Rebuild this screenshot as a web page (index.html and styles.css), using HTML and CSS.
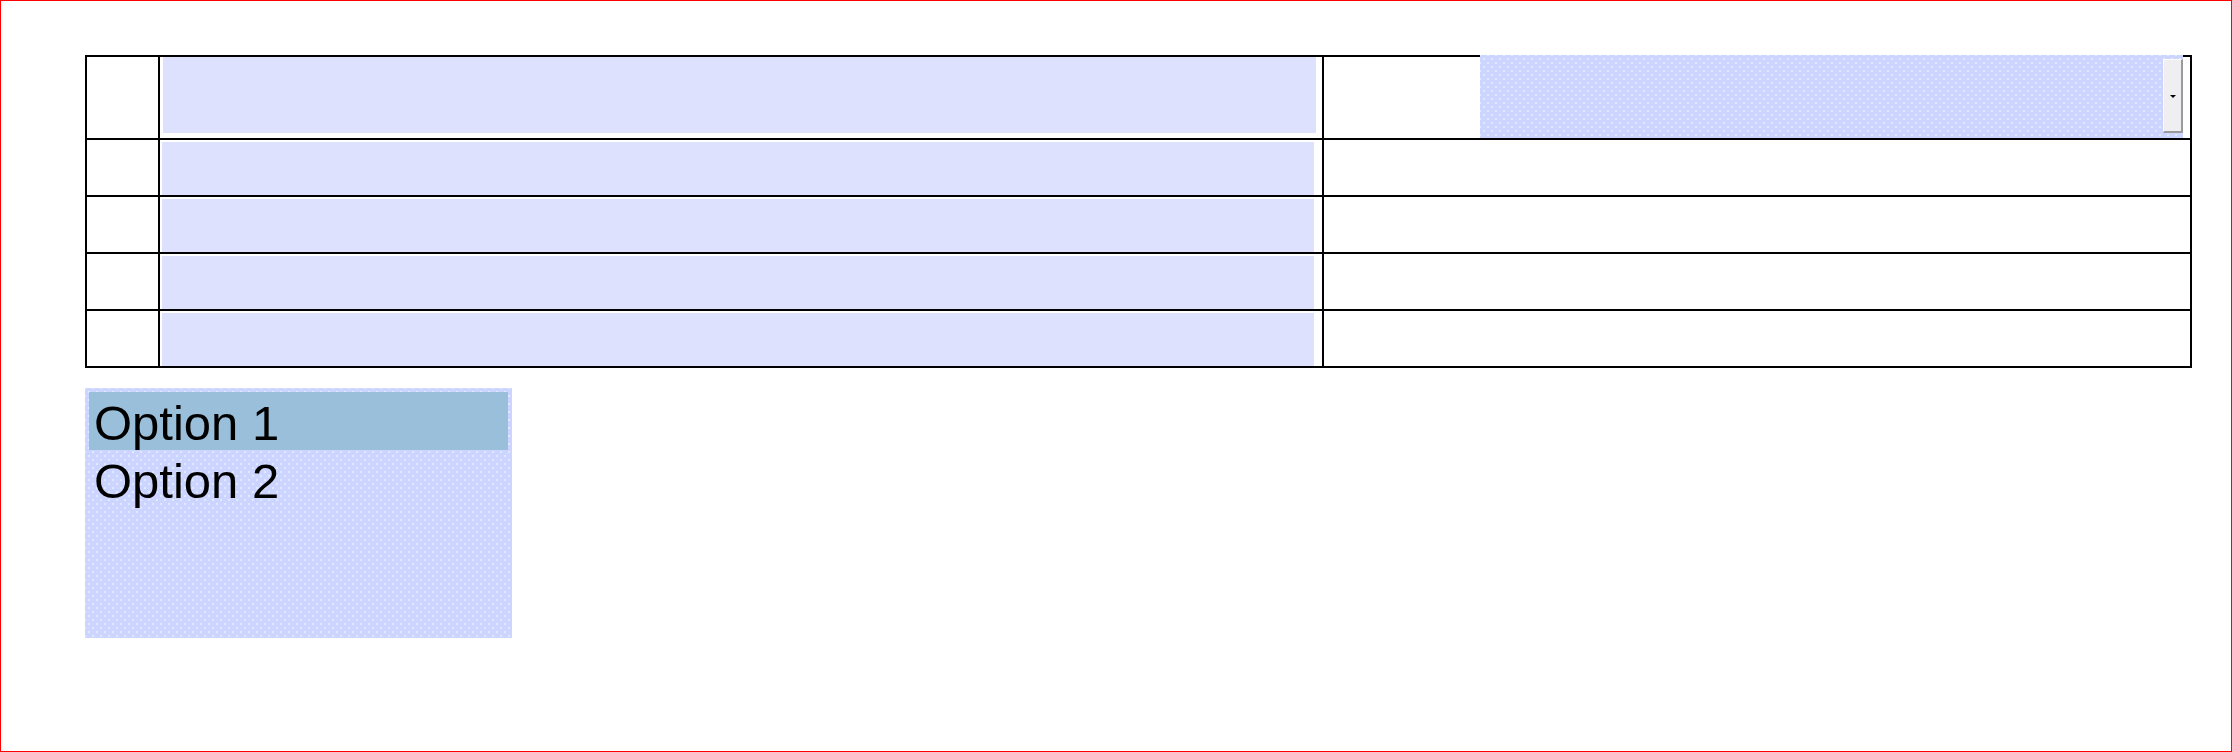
FILE: index.html
```html
<!DOCTYPE html>
<html lang="en">
<head>
    <meta charset="UTF-8">
    <title>Form</title>
    <link rel="stylesheet" href="styles.css">
</head>
<body>

<table class="grid">
    <tr class="first">
        <td class="num"></td>
        <td class="field"><input type="text" class="text-big"></td>
        <td class="extra">
            <div class="combo">
                <span class="combo-btn"><span class="arrow"></span></span>
            </div>
        </td>
    </tr>
    <tr>
        <td class="num"></td>
        <td class="field"><input type="text" class="text"></td>
        <td class="extra"></td>
    </tr>
    <tr>
        <td class="num"></td>
        <td class="field"><input type="text" class="text"></td>
        <td class="extra"></td>
    </tr>
    <tr>
        <td class="num"></td>
        <td class="field"><input type="text" class="text"></td>
        <td class="extra"></td>
    </tr>
    <tr>
        <td class="num"></td>
        <td class="field"><input type="text" class="text"></td>
        <td class="extra"></td>
    </tr>
</table>

<ul class="listbox">
    <li class="selected">Option 1</li>
    <li>Option 2</li>
</ul>

</body>
</html>
```

FILE: styles.css
```css
/* General Styling */
body {
    margin: 0;
    height: 752px;
    box-sizing: border-box;
    border: 1px solid #ff0000;
    padding: 54px 0 0 84px;
    background-color: #ffffff;
    font-family: "Liberation Sans", Arial, sans-serif;
}

/* Table */
.grid {
    border-collapse: separate;
    border-spacing: 0;
    border-left: 2px solid #000;
    border-top: 2px solid #000;
    table-layout: fixed;
}
.grid td {
    padding: 0;
    border-right: 2px solid #000;
    border-bottom: 2px solid #000;
    vertical-align: top;
    height: 55px;
    box-sizing: border-box;
}
.grid tr.first td {
    height: 83px;
}
.grid td.num {
    width: 73px;
}
.grid td.field {
    width: 1164px;
}
.grid td.extra {
    width: 868px;
}

/* Text fields */
.text-big, .text {
    display: block;
    border: none;
    outline: none;
    padding: 0;
    background-color: #dde1fd;
}
.text-big {
    margin: 0 0 0 3px;
    width: 1153px;
    height: 76px;
}
.text {
    margin: 2px 0 0 2px;
    width: 1152px;
    height: 53px;
}

/* Dotted widget fill */
.combo, .listbox {
    background-color: #ccd4ff;
    background-image:
        radial-gradient(circle, #d9eeff 0.7px, transparent 1px),
        radial-gradient(circle, #d9eeff 0.7px, transparent 1px);
    background-size: 8px 8px;
    background-position: 0 0, 4px 4px;
}

/* Combo box */
.combo {
    position: relative;
    margin: -2px 0 0 156px;
    width: 703px;
    height: 83px;
}
.combo-btn {
    position: absolute;
    right: 0;
    top: 4px;
    width: 20px;
    height: 74px;
    box-sizing: border-box;
    background-color: #efeff2;
    border-top: 1px solid #fafafa;
    border-left: 1px solid #fafafa;
    border-right: 2px solid #9a9a9a;
    border-bottom: 2px solid #9a9a9a;
}
.arrow {
    position: absolute;
    left: 6px;
    top: 35px;
    width: 0;
    height: 0;
    border-left: 3px solid transparent;
    border-right: 3px solid transparent;
    border-top: 3px solid #000;
}

/* List box */
.listbox {
    list-style: none;
    margin: 20px 0 0 0;
    padding: 4px;
    width: 427px;
    height: 250px;
    box-sizing: border-box;
}
.listbox li {
    font-size: 49px;
    line-height: 62px;
    height: 58px;
    padding-left: 5px;
    color: #000;
}
.listbox li.selected {
    background-color: #9abfda;
}
```
